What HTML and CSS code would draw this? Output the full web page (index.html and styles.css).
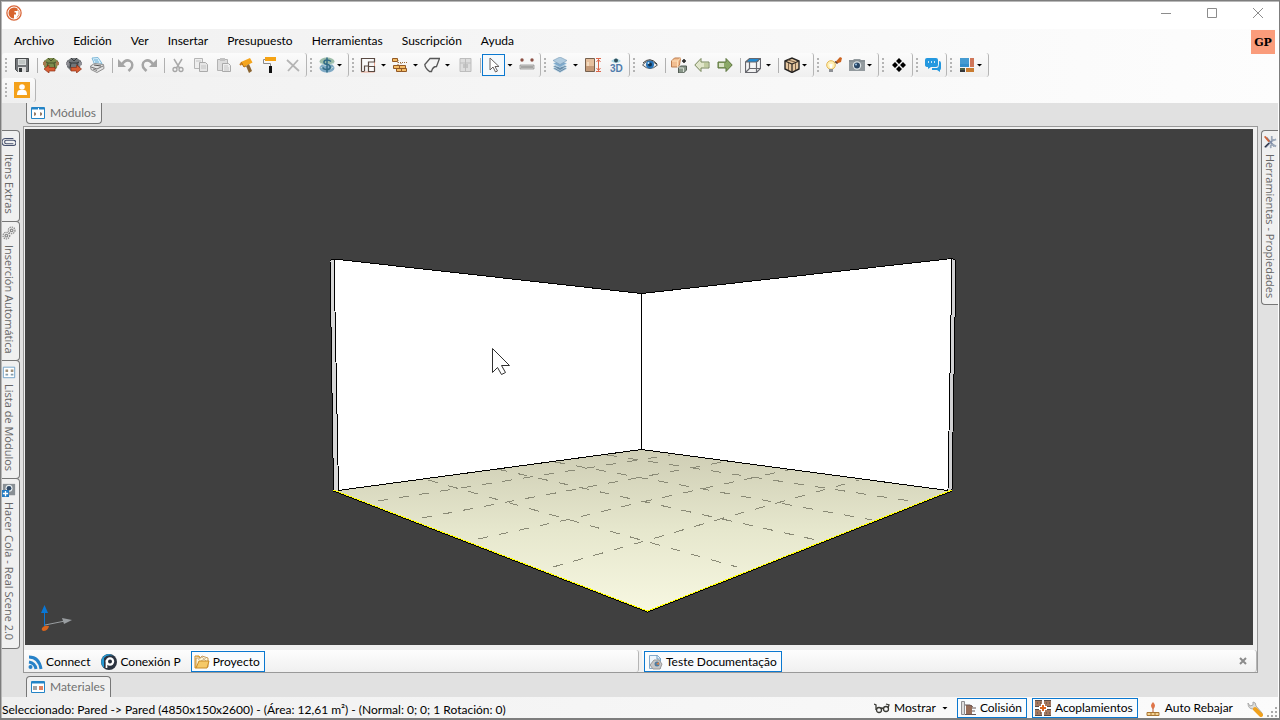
FILE: index.html
```html
<!DOCTYPE html>
<html lang="es">
<head>
<meta charset="utf-8">
<title>Proyecto</title>
<link rel="stylesheet" href="styles.css">
</head>
<body>
<div class="window">
<header class="titlebar">
  <svg class="logo" viewBox="0 0 16 16"><circle cx="8" cy="8" r="7.1" fill="#fff" stroke="#d9673a" stroke-width="1.3"/><path d="M8 2.500a5.500 5.500 0 1 0 0 11V9.500H10V7.500H8.500V6h3V3.400Q9.600 2.500 8 2.500Z" fill="#d8642e"/><path d="M11.500 4.500l1.500 2v3l-2 3" fill="none" stroke="#e58b62"/></svg>
  <div class="winbuttons">
    <button aria-label="Minimizar"><svg viewBox="0 0 12 12"><path d="M1 6.500h10"/></svg></button>
    <button aria-label="Maximizar"><svg viewBox="0 0 12 12"><path d="M1.500 1.500h9v9h-9z"/></svg></button>
    <button aria-label="Cerrar"><svg viewBox="0 0 12 12"><path d="M1 1l10 10M11 1L1 11"/></svg></button>
  </div>
</header>
<div class="ribbon">
  <nav class="menu">
    <button>Archivo</button><button>Edición</button><button>Ver</button><button>Insertar</button><button>Presupuesto</button><button>Herramientas</button><button>Suscripción</button><button>Ayuda</button>
  </nav>
  <button class="avatar">GP</button>
  <div class="toolrow">
    <div class="group">
      <i class="grip"></i>
      <button class="tool" aria-label="Guardar"><svg viewBox="0 0 16 16"><path d="M1.500 1.500h13v13h-11l-2-2z" fill="#74777a" stroke="#46494b"/><path d="M4 2h8v6H4z" fill="#d9dcdc"/><path d="M4 10h8v5H4z" fill="#ddd"/><path d="M5 11h3v4H5z" fill="#34383a"/><path d="M5 4h6M5 6h6" stroke="#a9b0ad"/></svg></button>
      <i class="sep"></i>
      <button class="tool" aria-label="Importar"><svg viewBox="0 0 16 16"><path d="M1 4l4-3h6l4 3-1 7-4 3H5l-4-4z" fill="#7c8c4c"/><path d="M1 4l4 2h6l4-2M5 6l-1 5M11 6l1 6M5 1l3 3 3-3" fill="none" stroke="#47532b"/><path d="M0 5l3-1v5l-3-1zM13 4l3 1v3l-3 1z" fill="#a87a50"/><path d="M1 12l5-4v2.500h6v3.500H6v2z" fill="#d85d32" stroke="#8d3218" stroke-width=".7"/></svg></button>
      <button class="tool" aria-label="Exportar"><svg viewBox="0 0 16 16"><path d="M1 4l4-3h6l4 3-1 7-4 3H5l-4-4z" fill="#72767a"/><path d="M1 4l4 2h6l4-2M5 6l-1 5M11 6l1 6M5 1l3 3 3-3" fill="none" stroke="#34383b"/><path d="M0 5l3-1v5l-3-1zM13 4l3 1v3l-3 1z" fill="#8f8f95"/><path d="M15.500 12l-5-4v2.500H5v3.500h5.500v2z" fill="#d85d32" stroke="#8d3218" stroke-width=".7"/></svg></button>
      <button class="tool" aria-label="Imprimir"><svg viewBox="0 0 16 16"><path d="M3 1l6-.5 4 6-7 2z" fill="#d8effb" stroke="#7fb9d8"/><path d="M5 3h4M6 5h4" stroke="#63a9d0"/><path d="M1.500 9l4-2.500 9 1 .5 4-7 4-6-3z" fill="#e2e2e2" stroke="#8e8e8e"/><path d="M2 10l6 2 6-3M4 12l4 1.500" fill="none" stroke="#777"/><path d="M5 8l7 1" stroke="#555"/></svg></button>
      <i class="sep"></i>
      <button class="tool" aria-label="Deshacer"><svg viewBox="0 0 16 16"><path d="M0 2v8h8z" fill="#a6a6a6"/><path d="M3.500 8C6 4 9 2.500 12 4s3 6 .5 8l-2 2" fill="none" stroke="#a6a6a6" stroke-width="2.500"/></svg></button>
      <button class="tool" aria-label="Rehacer"><svg viewBox="0 0 16 16"><path d="M16 2v8H8z" fill="#a6a6a6"/><path d="M12.500 8C10 4 7 2.500 4 4s-3 6-.5 8l2 2" fill="none" stroke="#a6a6a6" stroke-width="2.500"/></svg></button>
      <i class="sep"></i>
      <button class="tool" aria-label="Cortar"><svg viewBox="0 0 16 16"><path d="M4 2l5.500 9M12 2L6.500 11" stroke="#aaa" stroke-width="1.500"/><circle cx="5" cy="12.500" r="2" fill="none" stroke="#a5a5a5" stroke-width="1.300"/><circle cx="11" cy="12.500" r="2" fill="none" stroke="#a5a5a5" stroke-width="1.300"/></svg></button>
      <button class="tool" aria-label="Copiar"><svg viewBox="0 0 16 16"><path d="M1.500 1.500h8v10h-8z" fill="#eee" stroke="#b5b5b5"/><path d="M6.500 5.500h6l2 2v7h-8z" fill="#e5e5e5" stroke="#aaa"/><path d="M8 9h5M8 11h5M3 4h5" stroke="#c4c4c4"/></svg></button>
      <button class="tool" aria-label="Pegar"><svg viewBox="0 0 16 16"><path d="M1.500 2.500h10v11h-10z" fill="#ddd" stroke="#b3b3b3"/><path d="M4 1h5v3H4z" fill="#c2c2c2"/><path d="M6.500 6.500h6l2 2v6h-8z" fill="#eee" stroke="#aaa"/><path d="M8 9h4M8 11h5M8 13h5" stroke="#c5c5c5"/></svg></button>
      <button class="tool" aria-label="Formato"><svg viewBox="0 0 16 16"><path d="M2 5l9-4 2.500 4.500L5 10z" fill="#f5a51c"/><path d="M2 5l3 5 2-1" fill="none" stroke="#b46c0d"/><path d="M7 9l3-2 3 7-3 2z" fill="#8b6430"/><path d="M1 8l2-2" stroke="#c87817" stroke-width="2"/></svg></button>
      <button class="tool" aria-label="Pintar"><svg viewBox="0 0 16 16"><path d="M3 0h11v4H3z" fill="#f5a314"/><path d="M3 2.500H1.500v4h7V10" fill="none" stroke="#8b8b8b"/><path d="M7 9h3v7H7z" fill="#111"/></svg></button>
      <button class="tool" aria-label="Eliminar"><svg viewBox="0 0 16 16"><path d="M2 3l12 11M13 3L3 14" stroke="#b4b4b4" stroke-width="1.800"/></svg></button>
    </div>
    <div class="group">
      <i class="grip"></i>
      <button class="tool drop" aria-label="Precio"><svg viewBox="0 0 16 16"><ellipse cx="8" cy="4.500" rx="7.500" ry="4" fill="#9dbda9"/><ellipse cx="8" cy="11" rx="7.500" ry="4.500" fill="#7fa9c4"/><path d="M1.500 6Q8 11 14.500 6M1.500 10Q8 15 14.500 10" fill="none" stroke="#c7e0dc"/><path d="M12 4.500Q10 2.500 7.500 3C4 3.500 4 7 8 7.500s4.500 4.500.5 5Q5 13 3.500 10.500M8 .5v15" fill="none" stroke="#2f6a86" stroke-width="1.500"/></svg><i class="caret"></i></button>
    </div>
    <div class="group">
      <i class="grip"></i>
      <button class="tool drop wide" aria-label="Paredes"><svg viewBox="0 0 16 16"><path d="M14.500 2v13H1" fill="none" stroke="#e8a48e"/><path d="M1.500 14.500v-13h13v3.500h-6v4h-4v5M1.500 14.500h3M8.500 14.500v-5h6v5z" fill="#fafafa" stroke="#5a4a42" stroke-width="1.200"/></svg><i class="caret"></i></button>
      <button class="tool drop wide" aria-label="Ladrillos"><svg viewBox="0 0 16 16"><path d="M.5 1.500h5v3h-5zM1.500 8.500h6v3h-6zM7.500 8.500h6v3h-6zM4.500 11.500h5v3h-5zM9.500 11.500h5v3h-5z" fill="#f4bd67" stroke="#925825"/><path d="M6 5.500h9M6 3v5M9 6v2" stroke="#9a6c3c" stroke-dasharray="1 1"/></svg><i class="caret"></i></button>
      <button class="tool drop wide" aria-label="Forma"><svg viewBox="0 0 16 16"><path d="M6 1.500h9.500L12.500 9.500c-2 0-4 1-5 5H5.500Q1 11 .8 7.500z" fill="#f5f5f5" stroke="#565656" stroke-width="1.300"/></svg><i class="caret"></i></button>
      <button class="tool" aria-label="Armario"><svg viewBox="0 0 16 16"><path d="M3 1.500h11v13H3zM8.500 2v12M3 6h11" fill="#ddd" stroke="#bdbdbd"/><path d="M7 7v4M10 7v4" stroke="#aaa"/></svg></button>
      <i class="sep"></i>
      <button class="tool selected" aria-label="Seleccionar"><svg viewBox="0 0 16 16"><path d="M4 1v12l3-3 2.500 5 2-1L9 9.500h4z" fill="#fff" stroke="#66605f"/></svg></button><button class="dropper" aria-label="Opciones de selección"><i class="caret"></i></button>
      <button class="tool" aria-label="Medir"><svg viewBox="0 0 16 16"><path d="M1 8h14v4H1z" fill="#d4d4d2" stroke="#888" stroke-width=".7"/><path d="M3 9v2M5 9v2M7 9v2M9 9v2M11 9v2M13 9v2" stroke="#777"/><circle cx="3" cy="3" r="1.700" fill="#8c5044"/><circle cx="13" cy="3" r="1.700" fill="#8c5044"/></svg></button>
    </div>
    <div class="group">
      <i class="grip"></i>
      <button class="tool drop wide" aria-label="Capas"><svg viewBox="0 0 16 16"><path d="M8 8l7 3.500-7 4-7-4zM8 6l7 3.500-7 4-7-4z" fill="#668ba9" stroke="#cee3ef" stroke-width=".6"/><path d="M8 3l7 3.500-7 4-7-4z" fill="#7faacc" stroke="#dceef7" stroke-width=".6"/><path d="M8 0l7 3.500-7 4-7-4z" fill="#b1cce0" stroke="#789bb6" stroke-width=".6"/></svg><i class="caret"></i></button>
      <button class="tool" aria-label="Altura"><svg viewBox="0 0 16 16"><path d="M.5 1.500h9v13h-9z" fill="#c59a78" stroke="#77614e"/><path d="M1 2h8v7H1z" fill="#e6c09e"/><path d="M3 5v4" stroke="#fff5df"/><path d="M11 1.500h5M11 14.500h5M13.500 2v12M11.500 5l2-2.500 2 2.500M11.500 11l2 2.500 2-2.500" fill="none" stroke="#dd674b"/></svg></button>
      <button class="tool" aria-label="Vista 3D"><svg viewBox="0 0 16 16"><path d="M3 4Q8-1 13 4 8 8 3 4Z" fill="#a9d8e5"/><circle cx="8" cy="3.500" r="2" fill="#304e5b"/><text class="three" x="2" y="15">3D</text></svg></button>
    </div>
    <div class="group">
      <i class="grip"></i>
      <button class="tool" aria-label="Ver"><svg viewBox="0 0 16 16"><path d="M.5 8Q7 0 15.500 8 8 15 .5 8Z" fill="#eee" stroke="#53585b"/><circle cx="8" cy="7.500" r="4" fill="#2673b9"/><circle cx="8" cy="7.500" r="2" fill="#15334d"/><circle cx="6.500" cy="6" r="1" fill="#bde7ff"/><path d="M1 6Q8-1 15 7" fill="none" stroke="#333"/></svg></button>
      <i class="sep"></i>
      <button class="tool" aria-label="Mover módulo"><svg viewBox="0 0 16 16"><path d="M.5 4l3-3h6l-1 7-2 2h-6z" fill="#f2be91" stroke="#bc7c4e"/><path d="M1 4h5.500v6M6.500 4l3-3" fill="none" stroke="#fee0b9"/><path d="M7.500 11l2-2h6v4l-3 3h-5z" fill="#899689" stroke="#535c54"/><path d="M8 11h4.500v4" fill="none" stroke="#d4ddd2"/><path d="M11 4h4M13 2v4" stroke="#222" stroke-width="1.500"/></svg></button>
      <button class="tool" aria-label="Anterior"><svg viewBox="0 0 16 16"><path d="M.8 8L7 1.500V5h8v6H7v3.500z" fill="#e1e6cb" stroke="#76865b"/><path d="M10 6h4v4h-4" fill="#c1cca0"/></svg></button>
      <button class="tool" aria-label="Siguiente"><svg viewBox="0 0 16 16"><path d="M15.200 8L9 1.500V5H1v6h8v3.500z" fill="#8ba866" stroke="#5b733d"/><path d="M2 6h5v4H2" fill="#dbe3c8"/></svg></button>
      <i class="sep"></i>
      <button class="tool drop wide" aria-label="Vista superior"><svg viewBox="0 0 16 16"><path d="M1 5l4-4h10l-2 4z" fill="#218ad1"/><path d="M.5 5h11v10.500H.5zM.5 5l4-3.500h11l-4 3.500M15.500 2v9.500l-4 4M4.500 5v6.500l-4 4M4.500 11.500h11" fill="none" stroke="#66676d" stroke-width="1.200"/></svg><i class="caret"></i></button>
      <i class="sep"></i>
      <button class="tool drop" aria-label="Caja"><svg viewBox="0 0 16 16"><path d="M1 4l7-3 7 3v8l-7 3.500L1 12z" fill="#e6c7a0" stroke="#252321" stroke-width="1.400"/><path d="M1 4l7 3 7-3M8 7v8" fill="none" stroke="#332c25" stroke-width="1.300"/><path d="M4.500 6v7M11.500 6v7M4 3l7 2" stroke="#7c6045"/></svg><i class="caret"></i></button>
    </div>
    <div class="group">
      <i class="grip"></i>
      <button class="tool" aria-label="Iluminación"><svg viewBox="0 0 16 16"><circle cx="5" cy="8" r="4.300" fill="#fff0b5" stroke="#e3b654"/><path d="M4 7l1 4 1-4" fill="none" stroke="#fff" stroke-width="1.500"/><path d="M3 12h4v3H3z" fill="#8d9095"/><path d="M9.500 5l4.500-5 2 1-1 4-4 1.500z" fill="#cc6420"/><path d="M9 4.500l2.500 2" stroke="#563b2e" stroke-width="1.500"/></svg></button>
      <button class="tool drop" aria-label="Cámara"><svg viewBox="0 0 16 16"><path d="M0 3h4l1-1h6l1 1h4v11H0z" fill="#939a9e"/><path d="M0 4h16" stroke="#7c858a"/><circle cx="8" cy="8.500" r="4.200" fill="#dbe2e4"/><circle cx="8" cy="8.500" r="3" fill="#294564"/><circle cx="7" cy="7.500" r="1" fill="#9bc9ec"/></svg><i class="caret"></i></button>
    </div>
    <div class="group">
      <i class="grip"></i>
      <button class="tool" aria-label="Acoplar"><svg viewBox="0 0 16 16"><path d="M8 1l3 3-3 3-3-3zM4 5l3 3-3 3-3-3zM12 5l3 3-3 3-3-3zM8 9l3 3-3 3-3-3z"/></svg></button>
    </div>
    <div class="group">
      <i class="grip"></i>
      <button class="tool" aria-label="Chat"><svg viewBox="0 0 16 16"><path d="M2 1h9q2 0 2 2v5q0 2-2 2H6l-3 2v-2Q0 10 0 8V3q0-2 2-2z" fill="#2498df"/><path d="M14 4q2 0 2 2v5q0 2-1 2v2l-3-2H7v-2h5q2-1 2-4z" fill="#2498df"/><path d="M3 5h1M6 5h1M9 5h1" stroke="#fff" stroke-width="1.500"/></svg></button>
    </div>
    <div class="group">
      <i class="grip"></i>
      <button class="tool drop" aria-label="Materiales"><svg viewBox="0 0 16 16"><path d="M1 1h9v9H1z" fill="#338fcb"/><path d="M1 2h9M1 4h9M1 6h9" stroke="#59a7d7"/><path d="M11 1h4v9h-4z" fill="#cf7659"/><path d="M1 11h5v4H1z" fill="#4d6144"/><path d="M1 13h5v2H1z" fill="#34373a"/><path d="M7 11h8v4H7z" fill="#c97c31"/></svg><i class="caret"></i></button>
    </div>
  </div>
  <div class="toolrow">
    <div class="group">
      <i class="grip"></i>
      <button class="tool" aria-label="Usuario"><svg viewBox="0 0 16 16"><path d="M0 0h16v16H0z" fill="#f4a11a"/><circle cx="8" cy="5" r="2.800" fill="#fff"/><path d="M3 13q0-5 3-5h4q3 0 3 5z" fill="#fff"/></svg></button>
    </div>
  </div>
</div>
<main class="workspace">
  <aside class="side left">
    <button class="sidetab"><svg viewBox="0 0 16 16"><path d="M13 4H4a4 4 0 0 0 0 8h9a3 3 0 0 0 0-6H5a2 2 0 0 0 0 4h8" fill="none" stroke="#46506d" stroke-width="1.300"/></svg><span>Itens Extras</span></button>
    <button class="sidetab"><svg viewBox="0 0 16 16"><g fill="none" stroke="#8b8b8b" stroke-width="1.500"><circle cx="11" cy="5" r="3.800" stroke-dasharray="1.500 1"/><circle cx="11" cy="5" r="1.500"/><circle cx="5" cy="11" r="3.800" stroke-dasharray="1.500 1"/><circle cx="5" cy="11" r="1.500"/></g></svg><span>Inserción Automática</span></button>
    <button class="sidetab"><svg viewBox="0 0 16 16"><path d="M1.500 2.500h13v12h-13z" fill="#fff" stroke="#689bc5"/><path d="M4 5h3v3H4zM10 5h3v3h-3z" fill="#a09078"/><path d="M4 11h3M10 11h3" stroke="#849dab" stroke-width="2"/></svg><span>Lista de Módulos</span></button>
    <button class="sidetab"><svg viewBox="0 0 16 16"><path d="M1 1h14v13H1z" fill="#898f94"/><circle cx="8" cy="6" r="4" fill="#e6edf0"/><circle cx="8" cy="6" r="2.700" fill="#304a68"/><path d="M0 8h8v8H0z" fill="#217ac3"/><path d="M1 12h6M4 9v6" stroke="#fff" stroke-width="1.500"/></svg><span>Hacer Cola - Real Scene 2.0</span></button>
  </aside>
  <section class="center">
    <div class="dock top"><button class="docktab"><svg viewBox="0 0 16 16"><path d="M1.500 2.500h13v11h-13z" fill="#fff" stroke="#2484c6"/><path d="M2 3.500h12" stroke="#2484c6" stroke-width="2" stroke-dasharray="6 1"/><path d="M4 7l2 1v2l-2 1zM10 7l2 1v2l-2 1z" fill="#967e6b"/></svg>Módulos</button></div>
    <div class="frame">
      <svg class="scene" viewBox="25 129 1228 516" preserveAspectRatio="xMidYMid slice" role="img" aria-label="Habitación en 3D">
        <defs><linearGradient id="floor" x1="0" y1="0" x2="0" y2="1"><stop offset="0" stop-color="#cecdb4"/><stop offset=".5" stop-color="#e6e7cd"/><stop offset="1" stop-color="#f7f7e1"/></linearGradient></defs>
        <g shape-rendering="crispEdges">
          <path d="M641 449L951 490 647 611 334 490z" fill="url(#floor)"/>
          <g class="dashes">
            <path d="M428 480L737 567M497 469L821 541M555 462L872 520M607 455L917 502"/>
            <path d="M553 567L645 541 720 519 859 480M478 539L566 520 642 502 788 470M422 518L507 502 728 461M378 501L670 455"/>
          </g>
          <path d="M334 259L641 293V450L338 490z" fill="#fff"/><path d="M641 293L952 259 948 490 641 450z" fill="#fff"/>
          <path d="M330 260L334 259 338 490H333z" fill="#d7d7d7"/><path d="M956 260L952 259 948 490H952z" fill="#d1d1d3"/>
          <path d="M330 260.500L334 259 641.500 293.500 952 258.500 956 260.500 952 490M641.500 293.500v156M330 260.500L333.500 490M334 259L338.500 490M952 258.500L948 490M338 490.500L641.500 449.500 948 490.500" fill="none" stroke="#000"/>
          <path d="M333.500 491L647.500 612 952 491" fill="none" stroke="#000"/>
          <path d="M333.500 490L647.500 611 952 490" fill="none" stroke="#ff0"/>
        </g>
        <path d="M45 625l20-4" stroke="#999da0"/><path d="M62 618l10 2-8 4z" fill="#999da0"/><path d="M44.500 626v-13" stroke="#0876d5"/><path d="M41 613l3.500-8 3.500 8z" fill="#0876d5"/><path d="M42 628q2-3 7-2-1 5-6 5-2-1-1-3z" fill="#d8641d"/>
        <path d="M492.500 348.500v24l5-5 4 7 4-2-4-7h8z" fill="#fff" stroke="#303030" stroke-width="1"/>
      </svg>
      <div class="docs">
        <div class="doclist">
          <button class="doc"><svg viewBox="0 0 16 16"><g fill="none" stroke="#2782c8" stroke-width="3"><path d="M2 3q10 0 12 12M2 8q6 1 7 7"/></g><circle cx="3.500" cy="13" r="2" fill="#2782c8"/></svg>Connect</button>
          <button class="doc"><svg viewBox="0 0 16 16"><circle cx="8" cy="8" r="8" fill="#2b3340"/><path d="M8 0a8 8 0 0 0-5 14V4q3-4 10-2z" fill="#249ad5"/><circle cx="9" cy="7.500" r="4.200" fill="#fff"/><circle cx="9" cy="7.500" r="2" fill="#28303c"/><path d="M5.500 6v8" stroke="#fff" stroke-width="1.700"/></svg>Conexión P</button>
          <button class="doc current"><svg viewBox="0 0 16 16"><path d="M2 4h4l2-2 6 2v9H2z" fill="#fff8d7" stroke="#c5985d"/><path d="M4 6l4-3 4 4M7 7l5-3" fill="none" stroke="#cfbb9d"/><path d="M1 2h4l1 2M1 2v12h12l2-7H5l-3 7" fill="#f5c968" stroke="#ca8c29"/></svg>Proyecto</button>
        </div>
        <div class="doclist">
          <button class="doc current"><svg viewBox="0 0 16 16"><path d="M2.500 1.500h8l3 3v10h-11z" fill="#edf6fd" stroke="#82a9ca"/><path d="M10 1v4h4" fill="none" stroke="#6d9bc2"/><path d="M3 11l4-5h5l3 4-2 5H6z" fill="#c7c7c7" stroke="#999"/><circle cx="10" cy="10" r="2.500" fill="#507da2"/><path d="M9 10l3-2v3z" fill="#d88147"/></svg>Teste Documentação</button>
          <button class="closedoc" aria-label="Cerrar documento"><svg viewBox="0 0 8 8"><path d="M1 1l6 6M7 1L1 7"/></svg></button>
        </div>
      </div>
    </div>
    <div class="dock bottom"><button class="docktab"><svg viewBox="0 0 16 16"><path d="M1.500 2.500h13v11h-13z" fill="#fff" stroke="#2484c6"/><path d="M2 3.500h12" stroke="#2484c6" stroke-width="2"/><path d="M3 7h4v4H3z" fill="#a4a4a4"/><path d="M9 7h4v4H9z" fill="#df8261"/></svg>Materiales</button></div>
  </section>
  <aside class="side right">
    <button class="sidetab"><svg viewBox="0 0 16 16"><path d="M3 14L12 5M4 3l9 10" stroke="#7f8da7" stroke-width="2"/><path d="M10 1v4l2 1 3-1M9 15q-1-4 2-4l4 2" fill="none" stroke="#9ca8b9" stroke-width="2"/><path d="M1 2l2-1 5 6-2 1z" fill="#ce6338"/><path d="M2 14l5-5" stroke="#2b3243" stroke-width="1.500"/></svg><span>Herramientas - Propiedades</span></button>
  </aside>
</main>
<footer class="status">
  <span class="message">Seleccionado: Pared -&gt; Pared (4850x150x2600) - (Área: 12,61 m²) - (Normal: 0; 0; 1 Rotación: 0)</span>
  <button class="option"><svg viewBox="0 0 16 16"><g fill="none" stroke="#3b3b36" stroke-width="1.300"><circle cx="5" cy="10" r="2.500"/><circle cx="12" cy="9" r="2.500"/><path d="M7 9q1-2 2 0M2 10V5L0 4M14 8l1-3-3-1"/></g></svg>Mostrar<i class="caret"></i></button>
  <button class="option on"><svg viewBox="0 0 16 16"><path d="M1.500 1.500h3v13h-3z" fill="#ddd" stroke="#8e8e91"/><path d="M6 5h6v9H6z" fill="#966d59"/><path d="M5 5h5l3 2M5 14.500h11M12 8h4M12 11h3" fill="none" stroke="#655655"/></svg>Colisión</button>
  <button class="option on"><svg viewBox="0 0 16 16"><path d="M0 0h7v7H0zM9 0h7v7H9zM0 9h7v7H0zM9 9h7v7H9z" fill="#a4785f"/><path d="M0 .5h7M9 .5h7M0 15.500h7M9 15.500h7M0 6.500h5M11 6.500h5M0 9.500h5M11 9.500h5" stroke="#594b46"/><path d="M2 3h1M5 3h1M11 3h1M14 3h1M2 13h1M5 13h1M11 13h1M14 13h1" stroke="#594b46"/><path d="M8 4v8M4 8h8" stroke="#fff" stroke-width="4"/><path d="M8 5v6M5 8h6" stroke="#db641f" stroke-width="2"/></svg>Acoplamientos</button>
  <button class="option"><svg viewBox="0 0 16 16"><path d="M8 2q4 4 0 7-4-3 0-7z" fill="#df7549"/><path d="M8 8v4" stroke="#b95b35"/><path d="M2 12.500h12v3H2zM6 13v2M10 13v2" fill="#f4d292" stroke="#a97532"/></svg>Auto Rebajar</button>
  <button class="wrench" aria-label="Configurar"><svg viewBox="0 0 16 16"><path d="M1 2l2 3 3-1V1q3 0 3 4l6 7q1 3-2 3L6 8Q1 8 1 2z" fill="#dddddb" stroke="#aaa"/><path d="M8 8l6 6" stroke="#f0a11d" stroke-width="4" stroke-linecap="round"/></svg></button>
  <svg class="resize" viewBox="0 0 12 12"><path d="M9 1h2v2H9zM5 5h2v2H5zM9 5h2v2H9zM1 9h2v2H1zM5 9h2v2H5zM9 9h2v2H9z" fill="#aaa"/></svg>
</footer>
</div>
</body>
</html>
```
FILE: styles.css
```css
* { box-sizing: border-box; }
body { margin: 0; font-family: Lato, "Noto Sans", sans-serif; font-size: 12px; line-height: 16px; color: #000; }
button { margin: 0; padding: 0; border: 0; background: none; font: inherit; color: inherit; white-space: nowrap; }
svg { display: block; flex: none; width: 16px; height: 16px; }
.window { display: flex; flex-direction: column; height: 100vh; border: 1px solid #7d7d7d; border-width: 1px 1px 2px 1px; box-shadow: inset 1px 1px #b8b8b8; padding: 1px 1px 0; overflow: hidden; }
.titlebar { display: flex; align-items: flex-start; justify-content: space-between; height: 27px; flex: none; padding: 3px 4px 0; background: #fff; }
.winbuttons { display: flex; gap: 34px; padding: 2px 10px; }
.winbuttons svg { width: 12px; height: 12px; fill: none; stroke: #8c8c8c; }
.ribbon { position: relative; flex: none; background: linear-gradient(90deg, #f0f0f0, #fdfdfd); }
.menu { display: flex; gap: 19px; height: 24px; padding: 0 12px; }
.avatar { position: absolute; top: 1px; right: 3px; width: 24px; height: 24px; background: #fa9c7b; font: bold 11px "DejaVu Serif", serif; }
.toolrow { display: flex; height: 25px; }
.group { display: flex; align-items: center; height: 24px; padding-right: 2px; border-right: 1px solid #b5b5b5; border-radius: 3px; background: linear-gradient(#fbfbfb, #efefef); }
.grip { width: 2px; height: 15px; margin: 0 3px; background: repeating-linear-gradient(#b4b4b4 0 2px, transparent 2px 4px); }
.tool { display: flex; align-items: center; justify-content: center; width: 23px; height: 22px; }
.sep { width: 1px; height: 15px; margin: 0 1px 0 4px; background: #b0b0b0; }
.drop { width: 31px; gap: 2px; }
.drop.wide { width: 32px; gap: 5px; }
.caret { flex: none; width: 6px; height: 3px; background: #000; clip-path: polygon(0 0, 100% 0, 50% 100%); }
.selected { border: 1px solid #0a78d0; background: #f5f9fc; }
.dropper { display: flex; align-items: center; justify-content: center; width: 10px; height: 22px; }
.three { font: bold 10px "Liberation Sans", sans-serif; fill: #4f7cac; }
.workspace { display: flex; flex: 1; min-height: 0; background: #e1e1e1; }
.side { display: flex; flex-direction: column; flex: none; width: 18px; padding-top: 27px; font-family: "Open Sans", "Noto Sans", sans-serif; font-size: 11px; }
.side svg { width: 14px; height: 14px; }
.right { width: 17px; }
.sidetab { display: flex; flex-direction: column; align-items: center; gap: 5px; padding: 4px 3px 7px 0; border: 1px solid #777; border-left: 0; border-radius: 0 4px 4px 0; background: #f0f0f0; color: #666; }
.sidetab + .sidetab { margin-top: -1px; }
.right .sidetab { padding: 4px 0 6px; border: 1px solid #777; border-right: 0; border-radius: 4px 0 0 4px; }
.sidetab span { writing-mode: vertical-rl; line-height: 16px; }
.center { display: flex; flex-direction: column; flex: 1; min-width: 0; margin: 0 3px; }
.dock { display: flex; flex: none; height: 23px; padding-left: 3px; }
.docktab { display: flex; align-items: center; gap: 4px; height: 21px; padding: 0 5px 0 3px; border: 1px solid #777; background: #f0f0f0; color: #707070; }
.top .docktab { border-top: 0; border-radius: 0 0 4px 4px; }
.bottom .docktab { border-bottom: 0; border-radius: 4px 4px 0 0; }
.bottom { height: 24px; align-items: flex-end; }
.frame { display: flex; flex-direction: column; flex: 1; min-height: 0; border: 1px solid #999; background: #f0f0f0; }
.scene { flex: 1; width: auto; height: auto; min-height: 0; margin: 2px 4px 5px 1px; background: #404040; }
.dashes { fill: none; stroke: #8a8a76; stroke-dasharray: 10 11; }
.docs { display: flex; flex: none; height: 22px; gap: 3px; }
.doclist { display: flex; flex: 1; align-items: flex-end; gap: 8px; padding: 0 2px; background: linear-gradient(#fdfdfd, #f0f0f0); border-right: 1px solid #b5b5b5; border-radius: 0 3px 3px 0; }
.doc { display: flex; align-items: center; gap: 3px; height: 21px; padding: 0 2px 0 1px; }
.current { padding: 0 4px 0 2px; border: 1px solid #0a78d0; background: #f9fcfe; }
.closedoc { align-self: center; margin-left: auto; padding-right: 7px; }
.closedoc svg { width: 8px; height: 8px; stroke: #8b8b8b; stroke-width: 2px; }
.status { position: relative; display: flex; align-items: flex-end; flex: none; height: 21px; background: linear-gradient(90deg, #f0f0f0, #fbfbfb); }
.message { flex: 1; }
.option { display: flex; align-items: center; gap: 4px; height: 20px; margin-right: 5px; padding: 0 4px 0 2px; }
.option .caret { margin-left: 2px; }
.on { border: 1px solid #0a78d0; background: #f9fcfe; }
.wrench { margin: 0 15px 1px 5px; }
.resize { position: absolute; right: 0; bottom: 0; width: 12px; height: 12px; }
```
